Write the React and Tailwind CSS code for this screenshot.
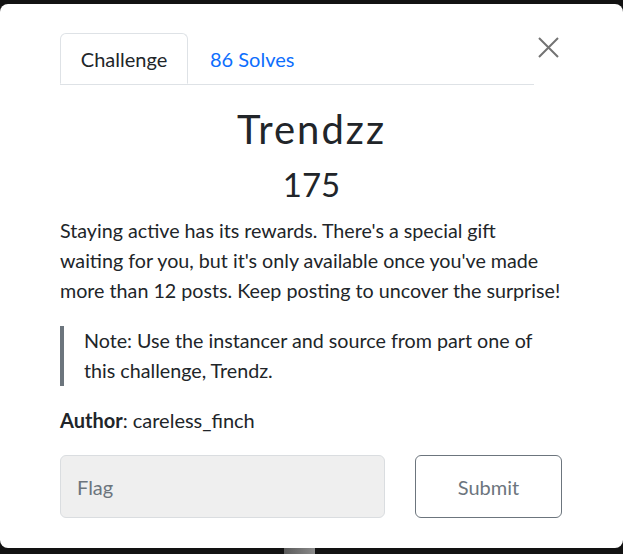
import React, { useState } from 'react';

export default function App() {
  const [flag, setFlag] = useState('');

  return (
    <div className="relative w-[623px] h-[554px] bg-[#121212] pt-[4px] pb-[6px] font-['Lato',sans-serif] text-[#212529]">
      <div className="h-full bg-white rounded-[8px] px-[60px] pt-[29px]">
        <div className="flex items-start">
          <div className="flex flex-1 border-b border-[#dee2e6]">
            <div className="h-[51px] w-[128px] -mb-px flex items-center justify-center bg-white border border-[#dee2e6] border-b-white rounded-t-[6px] text-[20px]">
              Challenge
            </div>
            <div className="h-[51px] px-[22px] flex items-center text-[20px] text-[#0d6efd]">86 Solves</div>
          </div>
          <button className="ml-[4px] mr-[4px] mt-[4px] w-[21px] h-[21px] flex items-center justify-center text-[#737373]">
            <svg width="21" height="21" viewBox="0 0 21 21" fill="none" stroke="currentColor" strokeWidth="2">
              <path d="M1 1 L20 20 M20 1 L1 20" />
            </svg>
          </button>
        </div>

        <h2 className="mt-[16px] text-center text-[40px] leading-[56px] tracking-[2px] font-normal">Trendzz</h2>
        <h3 className="mt-[5px] text-center text-[33px] leading-[44px] font-normal">175</h3>

        <p className="mt-[10px] text-[19.7px] leading-[30px] whitespace-nowrap">
          Staying active has its rewards. There's a special gift<br />
          waiting for you, but it's only available once you've made<br />
          more than 12 posts. Keep posting to uncover the surprise!
        </p>

        <blockquote className="mt-[20px] border-l-[4px] border-[#6c757d] pl-[20px] text-[19.7px] leading-[30px] whitespace-nowrap">
          Note: Use the instancer and source from part one of<br />
          this challenge, Trendz.
        </blockquote>

        <p className="mt-[19px] text-[20px] leading-[30px]">
          <span className="font-bold">Author</span>: careless_finch
        </p>

        <div className="mt-[20px] flex gap-[30px]">
          <input
            placeholder="Flag"
            value={flag}
            onChange={e => setFlag(e.target.value)}
            className="w-[325px] h-[63px] px-[16px] bg-[#efefef] border border-[#dadde0] rounded-[6px] text-[20px] placeholder:text-[#6c757d] focus:outline-none"
          />
          <button className="w-[147px] h-[63px] border border-[#6c757d] rounded-[6px] text-[20px] text-[#6c757d] bg-white">
            Submit
          </button>
        </div>
      </div>
      <div className="absolute left-[284px] bottom-0 w-[31px] h-[6px] bg-gradient-to-r from-[#5a5a5a] to-[#8a8a8a]" />
    </div>
  );
}
